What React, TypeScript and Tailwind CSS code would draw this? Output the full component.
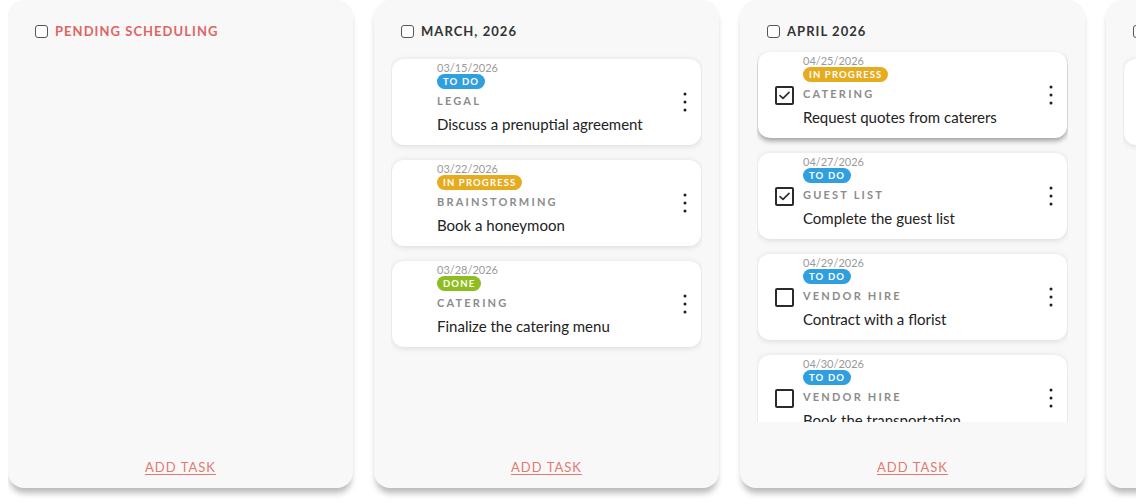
import type { ReactNode } from 'react'

type Status = 'todo' | 'progress' | 'done'

interface Task {
  date: string
  status: Status
  category: string
  title: string
  checked?: boolean
  lifted?: boolean
}

interface Group {
  title: string
  tone: 'alert' | 'normal'
  selectable: boolean
  offset: string
  tasks: Task[]
}

const statusStyle: Record<Status, { label: string; className: string }> = {
  todo: { label: 'TO DO', className: 'bg-[#2f9fe0]' },
  progress: { label: 'IN PROGRESS', className: 'bg-[#e6ab1f]' },
  done: { label: 'DONE', className: 'bg-[#8dbd1f]' },
}

const groups: Group[] = [
  { title: 'PENDING SCHEDULING', tone: 'alert', selectable: false, offset: 'pt-[11px]', tasks: [] },
  {
    title: 'MARCH, 2026',
    tone: 'normal',
    selectable: false,
    offset: 'pt-[11px]',
    tasks: [
      { date: '03/15/2026', status: 'todo', category: 'LEGAL', title: 'Discuss a prenuptial agreement' },
      { date: '03/22/2026', status: 'progress', category: 'BRAINSTORMING', title: 'Book a honeymoon' },
      { date: '03/28/2026', status: 'done', category: 'CATERING', title: 'Finalize the catering menu' },
    ],
  },
  {
    title: 'APRIL 2026',
    tone: 'normal',
    selectable: true,
    offset: 'pt-[4px]',
    tasks: [
      { date: '04/25/2026', status: 'progress', category: 'CATERING', title: 'Request quotes from caterers', checked: true, lifted: true },
      { date: '04/27/2026', status: 'todo', category: 'GUEST LIST', title: 'Complete the guest list', checked: true },
      { date: '04/29/2026', status: 'todo', category: 'VENDOR HIRE', title: 'Contract with a florist' },
      { date: '04/30/2026', status: 'todo', category: 'VENDOR HIRE', title: 'Book the transportation' },
    ],
  },
  {
    title: 'MAY 2026',
    tone: 'normal',
    selectable: false,
    offset: 'pt-[11px]',
    tasks: [
      { date: '05/06/2026', status: 'todo', category: 'ATTIRE', title: 'Schedule the final dress fitting' },
    ],
  },
]

function MoreDots() {
  return (
    <svg width="4" height="20" viewBox="0 0 4 20" className="text-[#1f1f1f]">
      <circle cx="2" cy="2" r="1.5" fill="currentColor" />
      <circle cx="2" cy="10" r="1.5" fill="currentColor" />
      <circle cx="2" cy="18" r="1.5" fill="currentColor" />
    </svg>
  )
}

function TaskCheck({ checked }: { checked?: boolean }) {
  return (
    <span className="flex h-[19px] w-[19px] shrink-0 items-center justify-center rounded-[2px] border-2 border-[#2b2b2b] bg-white">
      {checked && (
        <svg width="11" height="9" viewBox="0 0 11 9" fill="none">
          <path d="M1 4.6 L4 7.4 L10 1.4" stroke="#2b2b2b" strokeWidth="1.6" strokeLinecap="round" strokeLinejoin="round" />
        </svg>
      )}
    </span>
  )
}

function TaskCard({ task, selectable }: { task: Task; selectable: boolean }) {
  const badge = statusStyle[task.status]
  return (
    <div
      className={
        'flex shrink-0 items-center rounded-xl bg-white pl-[17px] pr-[12px] ' +
        (task.lifted
          ? 'shadow-[0_3px_5px_rgba(0,0,0,0.35)]'
          : 'shadow-[0_1px_6px_rgba(0,0,0,0.13)]')
      }
    >
      <div className="w-[19px] shrink-0">{selectable && <TaskCheck checked={task.checked} />}</div>
      <div className="ml-[9px] flex min-w-0 flex-1 flex-col items-start pt-[3px] pb-[11px]">
        <div className="text-[11px] leading-[12px] text-[#9a9a9a]">{task.date}</div>
        <span
          className={
            'flex h-[15px] items-center rounded-full px-[6px] text-[9.5px] leading-none font-bold tracking-[0.12em] text-white ' +
            badge.className
          }
        >
          {badge.label}
        </span>
        <div className="mt-[5px] text-[11px] leading-[14px] font-bold tracking-[0.2em] text-[#8c8c8c]">
          {task.category}
        </div>
        <div className="mt-[6px] w-full truncate text-[15px] leading-[20px] text-[#222]">{task.title}</div>
      </div>
      <button className="flex h-6 w-2 items-center justify-center">
        <MoreDots />
      </button>
    </div>
  )
}

function Column({ group }: { group: Group }): ReactNode {
  return (
    <section className="flex h-[488px] w-[345px] shrink-0 flex-col rounded-2xl bg-[#f8f8f8] shadow-[0_7px_6px_-2px_rgba(0,0,0,0.28)]">
      <header className="flex h-[48px] shrink-0 items-start gap-[7px] pt-[23px] pl-[27px]">
        <span className="mt-[2px] h-[13px] w-[13px] rounded-[3px] border-[1.5px] border-[#555] bg-white" />
        <h2
          className={
            'text-[13px] leading-[16px] font-bold tracking-[0.08em] ' +
            (group.tone === 'alert' ? 'text-[#e06462]' : 'text-[#333]')
          }
        >
          {group.title}
        </h2>
      </header>
      <div className="mx-[17px] h-[374px] overflow-hidden">
        <div className={'flex flex-col gap-[15px] px-px ' + group.offset}>
          {group.tasks.map((task) => (
            <TaskCard key={task.date + task.title} task={task} selectable={group.selectable} />
          ))}
        </div>
      </div>
      <footer className="flex flex-1 items-end justify-center pb-[13px]">
        <button className="text-[13px] leading-[16px] tracking-[0.08em] text-[#e27a72] underline underline-offset-2">
          ADD TASK
        </button>
      </footer>
    </section>
  )
}

export default function App() {
  return (
    <div className="h-[504px] w-[1144px] bg-white px-2" style={{ fontFamily: 'Lato, "Noto Sans", sans-serif' }}>
      <div className="flex h-[504px] gap-[21px] overflow-hidden">
        {groups.map((group) => (
          <Column key={group.title} group={group} />
        ))}
      </div>
    </div>
  )
}
